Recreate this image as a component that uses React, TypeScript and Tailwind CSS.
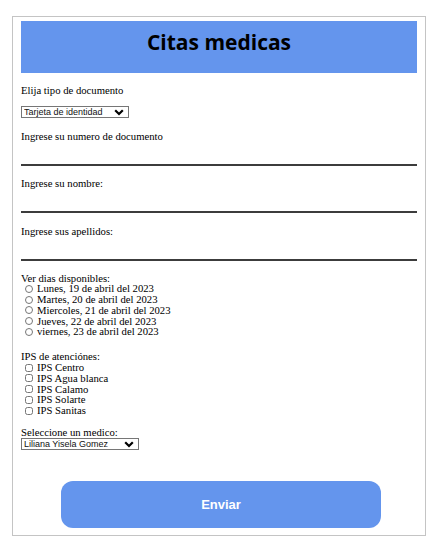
import { useState } from 'react';

const dias = [
  'Lunes, 19 de abril del 2023',
  'Martes, 20 de abril del 2023',
  'Miercoles, 21 de abril del 2023',
  'Jueves, 22 de abril del 2023',
  'viernes, 23 de abril del 2023',
];

const ips = ['IPS Centro', 'IPS Agua blanca', 'IPS Calamo', 'IPS Solarte', 'IPS Sanitas'];

function Chevron() {
  return (
    <svg width="10" height="7" viewBox="0 0 10 7" className="pointer-events-none absolute right-[5px] top-[3px]">
      <path d="M1.2 1.2 L5 5 L8.8 1.2" fill="none" stroke="#000" strokeWidth="2.2" />
    </svg>
  );
}

function Select({ options, width }: { options: string[]; width: string }) {
  return (
    <div className={`relative ${width}`}>
      <select className="block h-[12px] w-full appearance-none border border-[#767676] bg-white pl-[2px] text-[9px] leading-[10px] text-[#111] outline-none [font-family:'Liberation_Sans',Arial,sans-serif]">
        {options.map((o) => (
          <option key={o}>{o}</option>
        ))}
      </select>
      <Chevron />
    </div>
  );
}

function Field({ label }: { label: string }) {
  return (
    <div className="mt-[10.5px]">
      <p className="leading-[14px]">{label}</p>
      <input type="text" className="mt-[15px] block h-[8px] w-full border-b-2 border-[#3c3c3c] outline-none" />
    </div>
  );
}

export default function App() {
  const [dia, setDia] = useState('');

  return (
    <div className="min-h-screen bg-white pl-[12px] pt-[16px] text-[10.7px] text-black [font-family:'Liberation_Serif','Times_New_Roman',serif]">
      <form
        className="w-[414px] h-[520px] border border-[#c4c4c4] px-[8px] pt-[4px]"
        onSubmit={(e) => e.preventDefault()}
      >
        {/* Encabezado */}
        <header className="flex h-[52px] items-center justify-center bg-[#6495ed] pb-[8px]">
          <h1 className="text-[21px] font-bold [font-family:'Open_Sans',sans-serif]">Citas medicas</h1>
        </header>

        <p className="mt-[10px] leading-[14px]">Elija tipo de documento</p>
        <div className="mt-[9px]">
          <Select options={['Tarjeta de identidad', 'Cedula de ciudadania']} width="w-[108px]" />
        </div>

        <div className="mt-[0.5px]">
          <Field label="Ingrese su numero de documento" />
          <Field label="Ingrese su nombre:" />
          <Field label="Ingrese sus apellidos:" />
        </div>

        {/* Dias */}
        <div className="mt-[12px]">
          <p className="leading-[11px]">Ver dias disponibles:</p>
          {dias.map((d) => (
            <label key={d} className="flex h-[10.75px] items-center leading-[11px]">
              <input
                type="radio"
                name="dia"
                checked={dia === d}
                onChange={() => setDia(d)}
                className="ml-[4px] mr-[4px] h-[8px] w-[8px] accent-[#6495ed]"
              />
              {d}
            </label>
          ))}
        </div>

        {/* IPS */}
        <div className="mt-[14px]">
          <p className="leading-[11px]">IPS de atenciónes:</p>
          {ips.map((i) => (
            <label key={i} className="flex h-[10.75px] items-center leading-[11px]">
              <input type="checkbox" className="ml-[4px] mr-[4px] h-[8px] w-[8px]" />
              {i}
            </label>
          ))}
        </div>

        <div className="mt-[11px]">
          <p className="leading-[11px]">Seleccione un medico:</p>
          <Select options={['Liliana Yisela Gomez', 'Carlos Perez']} width="w-[118px]" />
        </div>

        <div className="mt-[31px] pl-[40px]">
          <button
            type="submit"
            className="h-[47px] w-[320px] rounded-[12px] bg-[#6495ed] text-[13px] font-bold text-white [font-family:'Liberation_Sans',Arial,sans-serif]"
          >
            Enviar
          </button>
        </div>
      </form>
    </div>
  );
}
